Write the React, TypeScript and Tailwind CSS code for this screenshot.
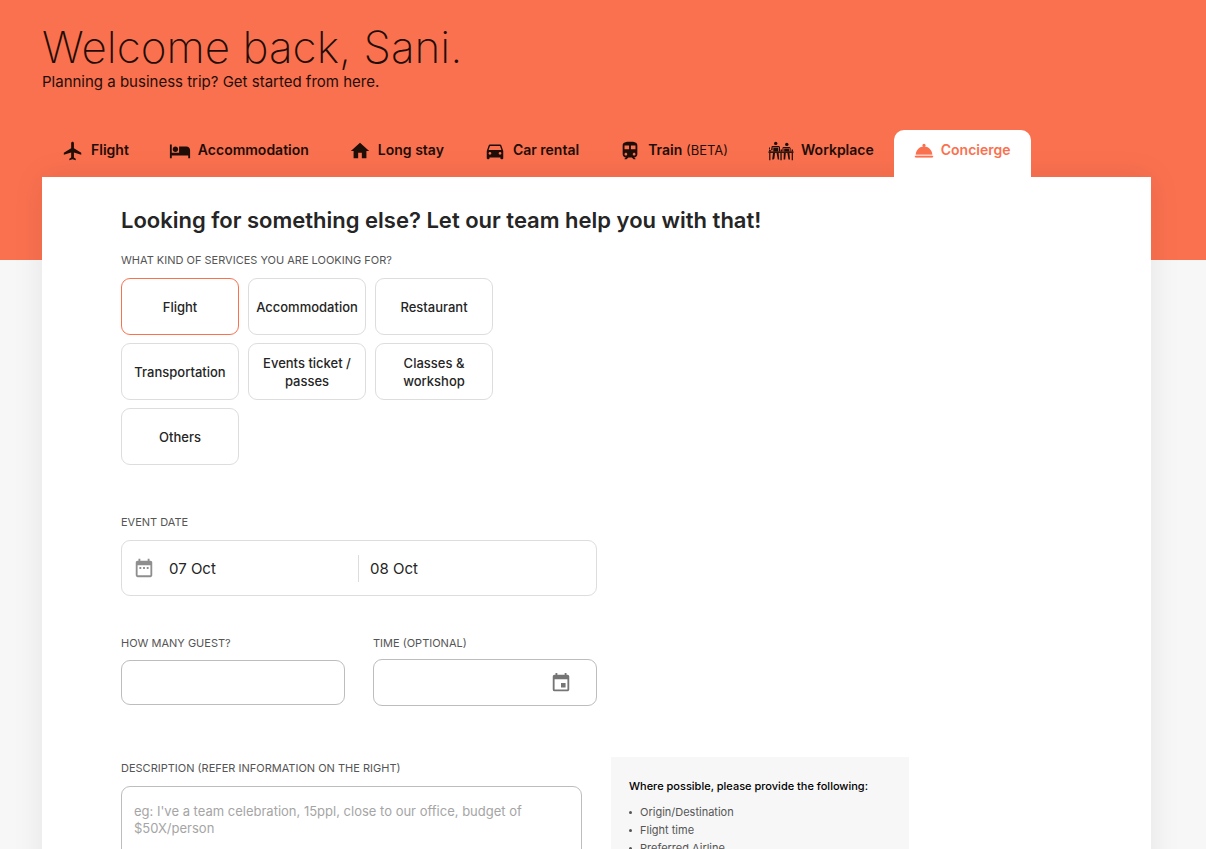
import { type ReactNode } from "react";
import {
  MdDateRange,
  MdDirectionsCar,
  MdEvent,
  MdFlight,
  MdHome,
  MdHotel,
  MdTrain,
} from "react-icons/md";

function WorkplaceIcon() {
  return (
    <svg width="26" height="20" viewBox="0 0 26 20" fill="currentColor" aria-hidden="true">
      <circle cx="7.7" cy="2.4" r="1.7" />
      <circle cx="18.8" cy="3.4" r="1.7" />
      {/* shoulders and laptops */}
      <path d="M3.800 5h7.200l1 1v4.500h-1V6.200H4.600v3H3z" />
      <path d="M15 6h6.600l1 1v3.500h-1V7H15.500v3h-1V7z" />
      <path d="M5.300 6.800h5v3.800h-5zM16.200 7.600h4.800v3H16.200z" />
      <path d="M.5 10.400h25v1.500H.5z" />
      <path d="M1 6.500h1v2H1zM1 9h1.800v1.500H1zM12.600 8.500h1.600v2h-1.600zM23.600 8.500H25v2h-1.400z" />
      <path d="M1.200 11.900h1.200v7.300H1.200zM23.700 11.900h1.200v7.300h-1.200zM12.400 11.900h1.300v7.300h-1.300z" />
      <path d="M5 11.900h2l-.6 5.600-1 1H4.200zM8.600 11.900h2l.6 6.600H9.800zM15.800 11.900h2l-.6 6.600h-1.600zM19.400 11.900h2l.6 6.600h-1.500z" />
    </svg>
  );
}

function ConciergeIcon() {
  return (
    <svg width="20" height="16" viewBox="0 0 20 16" fill="currentColor" aria-hidden="true">
      <circle cx="10" cy="2.4" r="1.6" />
      <path d="M1.700 11.400C2 7 5.600 3.500 10 3.500s8 3.500 8.300 7.900z" />
      <path d="M1.700 11.400h16.600v1H1.700z" opacity=".5" />
      <path d="M.8 12.800h18.400V14H.8z" />
      <path d="M1.300 14h17.400v1H1.300z" opacity=".6" />
    </svg>
  );
}

type Tab = { label: string; note?: string; icon: ReactNode; active?: boolean };

const tabs: Tab[] = [
  { label: "Flight", icon: <MdFlight size={22} /> },
  { label: "Accommodation", icon: <MdHotel size={22} /> },
  { label: "Long stay", icon: <MdHome size={22} /> },
  { label: "Car rental", icon: <MdDirectionsCar size={22} /> },
  { label: "Train", note: "(BETA)", icon: <MdTrain size={22} /> },
  { label: "Workplace", icon: <WorkplaceIcon /> },
  { label: "Concierge", icon: <ConciergeIcon />, active: true },
];

const services = [
  "Flight",
  "Accommodation",
  "Restaurant",
  "Transportation",
  "Events ticket / passes",
  "Classes & workshop",
  "Others",
];

const details = ["Origin/Destination", "Flight time", "Preferred Airline", "Number of passengers"];

const labelClass = "block text-[11px] leading-4 text-[#555] uppercase";

export default function App() {
  return (
    <div className="h-screen overflow-hidden bg-[#f7f7f7] font-['Inter',sans-serif] text-[#252525]">
      <div className="bg-linear-to-b from-[#fa714f] from-[260px] to-transparent to-[260px] pr-[55px] pl-[42px]">
        <header className="pt-5 text-[#1f0d08]">
          <h1 className="text-[44px] leading-[54px] font-extralight">Welcome back, Sani.</h1>
          <p className="text-[15px] leading-4">Planning a business trip? Get started from here.</p>
        </header>

        <nav className="mt-10 flex">
          {tabs.map((tab) => (
            <button
              key={tab.label}
              type="button"
              className={
                tab.active
                  ? "relative z-10 flex h-[47px] items-center gap-[7px] rounded-t-[10px] bg-white px-5 pb-1.5 text-sm font-semibold text-[#fa714f]"
                  : "flex h-[47px] items-center gap-[7px] px-5 pb-1.5 text-sm font-semibold text-[#1f0d08]"
              }
            >
              {tab.icon}
              <span className="pb-0.5 whitespace-nowrap">
                {tab.label}
                {tab.note ? <span className="text-[13px] font-normal"> {tab.note}</span> : null}
              </span>
            </button>
          ))}
        </nav>

        <main className="bg-white px-[79px] pt-7 pb-20 shadow-[0_0_30px_rgba(0,0,0,0.08)]">
          <h2 className="text-[22px] leading-[30px] font-semibold">
            Looking for something else? Let our team help you with that!
          </h2>

          <p className={`${labelClass} mt-[17px]`}>What kind of services you are looking for?</p>
          <div className="mt-2.5 grid w-fit grid-cols-[118px_118px_118px] gap-x-[9px] gap-y-2">
            {services.map((service, index) => (
              <button
                key={service}
                type="button"
                className={
                  index === 0
                    ? "h-[57px] rounded-[9px] border border-[#fa714f] px-1 text-[13px] leading-[18px] font-medium"
                    : "h-[57px] rounded-[9px] border border-[#ddd] px-1 text-[13px] leading-[18px] font-medium"
                }
              >
                {service}
              </button>
            ))}
          </div>

          <form className="mt-[49px]">
            <label htmlFor="start" className={labelClass}>
              Event date
            </label>
            <div className="mt-2.5 flex h-14 w-full max-w-[476px] items-center rounded-[9px] border border-[#ddd] pl-[11px]">
              <MdDateRange size={22} className="shrink-0 text-[#8e8e8e]" />
              <input
                id="start"
                defaultValue="07 Oct"
                className="ml-3.5 h-[27px] w-[190px] border-r border-[#ddd] text-[15px] outline-none"
              />
              <input
                aria-label="End date"
                defaultValue="08 Oct"
                className="ml-[11px] h-[27px] w-[190px] text-[15px] outline-none"
              />
            </div>

            <div className="mt-[39px] grid max-w-[476px] grid-cols-2 gap-7">
              <div>
                <label htmlFor="guests" className={labelClass}>
                  How many guest?
                </label>
                <input
                  id="guests"
                  className="mt-[9px] block h-[45px] w-full rounded-[9px] border border-[#bdbdbd] px-3 text-sm outline-none"
                />
              </div>
              <div>
                <label htmlFor="time" className={labelClass}>
                  Time (optional)
                </label>
                <div className="mt-2 flex h-[47px] items-center rounded-[9px] border border-[#bdbdbd] pr-6 pl-3">
                  <input id="time" className="min-w-0 flex-1 text-sm outline-none" />
                  <button type="button" aria-label="Choose time">
                    <MdEvent size={22} className="text-[#757575]" />
                  </button>
                </div>
              </div>
            </div>

            <div className="mt-[51px] flex items-start gap-[29px]">
              <div className="w-[461px] pt-[3px]">
                <label htmlFor="description" className={labelClass}>
                  Description (refer information on the right)
                </label>
                <textarea
                  id="description"
                  rows={6}
                  placeholder="eg: I've a team celebration, 15ppl, close to our office, budget of $50X/person"
                  className="mt-2.5 block w-full resize-none rounded-[9px] border border-[#bdbdbd] px-3 py-4 text-[13px] leading-[17px] outline-none placeholder:text-[#a5a5a5]"
                />
              </div>
              <aside className="w-[298px] bg-[#f7f7f7] px-[18px] pt-5 pb-6 text-[11px] leading-[18px]">
                <h3 className="font-medium text-black">Where possible, please provide the following:</h3>
                <ul className="mt-2 text-[#555]">
                  {details.map((detail) => (
                    <li
                      key={detail}
                      className="flex items-center gap-2 before:size-[3px] before:rounded-full before:bg-[#555]"
                    >
                      {detail}
                    </li>
                  ))}
                </ul>
              </aside>
            </div>
          </form>
        </main>
      </div>
    </div>
  );
}
